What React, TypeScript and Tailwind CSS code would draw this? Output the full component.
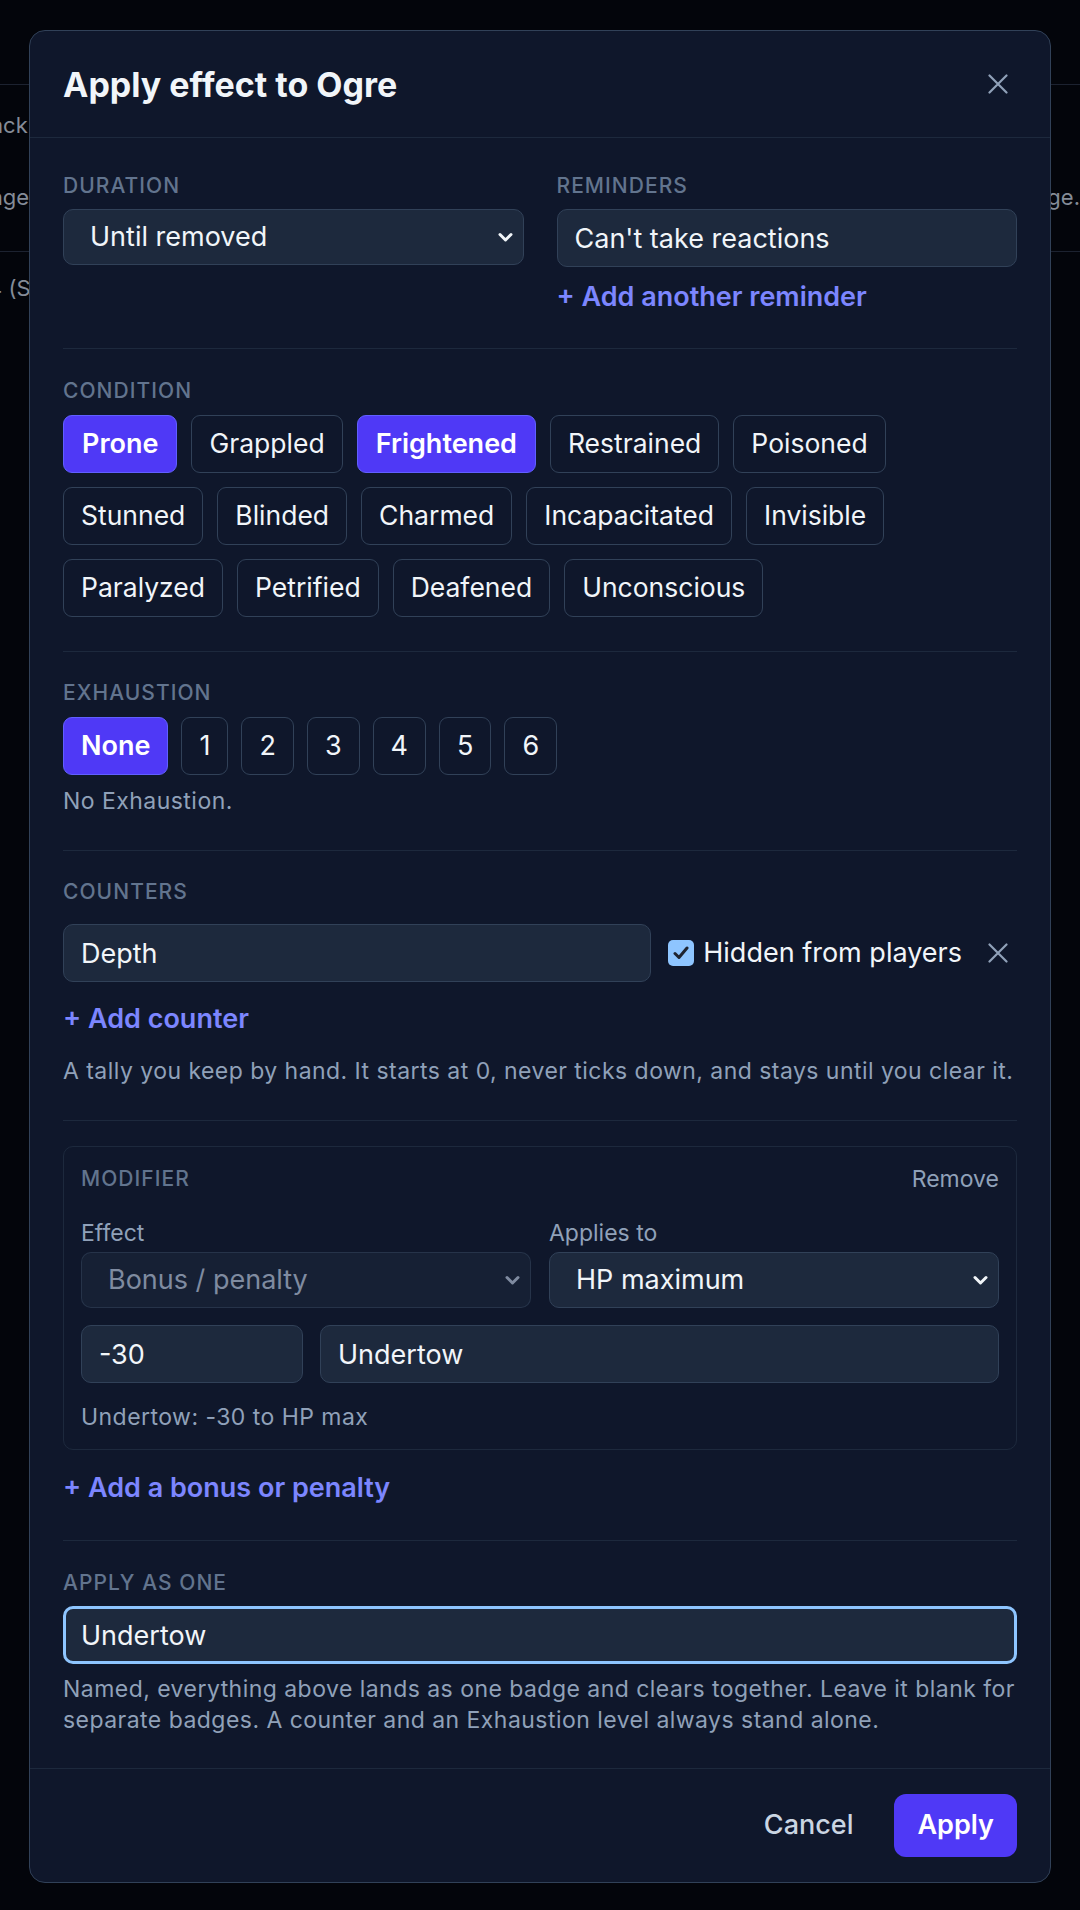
import React from "react";

const conditions = [
  { name: "Prone", on: true },
  { name: "Grappled", on: false },
  { name: "Frightened", on: true },
  { name: "Restrained", on: false },
  { name: "Poisoned", on: false },
  { name: "Stunned", on: false },
  { name: "Blinded", on: false },
  { name: "Charmed", on: false },
  { name: "Incapacitated", on: false },
  { name: "Invisible", on: false },
  { name: "Paralyzed", on: false },
  { name: "Petrified", on: false },
  { name: "Deafened", on: false },
  { name: "Unconscious", on: false },
];

const levels = ["1", "2", "3", "4", "5", "6"];

function Cross() {
  return (
    <svg width="20" height="20" viewBox="0 0 20 20" fill="none" stroke="#90a1b9" strokeWidth="2.2" strokeLinecap="round">
      <path d="M1.5 1.5 18.5 18.5M18.5 1.5 1.5 18.5" />
    </svg>
  );
}

function Chevron({ dim }: { dim?: boolean }) {
  return (
    <svg
      width="15"
      height="10"
      viewBox="0 0 15 10"
      fill="none"
      stroke={dim ? "#7f8ba0" : "#f1f5f9"}
      strokeWidth="3"
      strokeLinecap="round"
      strokeLinejoin="round"
      className="pointer-events-none absolute right-[11px] top-1/2 -translate-y-1/2"
    >
      <path d="M2 2.5 7.5 8 13 2.5" />
    </svg>
  );
}

function Label({ children }: { children: React.ReactNode }) {
  return <div className="text-[21px] leading-[28px] font-medium uppercase tracking-wider text-slate-500">{children}</div>;
}

function Select({ value, disabled }: { value: string; disabled?: boolean }) {
  return (
    <div className="relative">
      <select
        disabled={disabled}
        defaultValue={value}
        className={
          disabled
            ? "h-[56px] w-full appearance-none rounded-[10px] border border-slate-700/60 bg-slate-800/50 pl-[26px] text-[27px] text-[#7f8ba0] outline-none"
            : "h-[56px] w-full appearance-none rounded-[10px] border border-slate-700 bg-slate-800 pl-[26px] text-[27px] text-slate-100 outline-none"
        }
      >
        <option>{value}</option>
      </select>
      <Chevron dim={disabled} />
    </div>
  );
}

function TextInput({ value, className = "" }: { value: string; className?: string }) {
  return (
    <input
      defaultValue={value}
      className={`h-[58px] rounded-[10px] border border-slate-700 bg-slate-800 px-[17px] text-[27px] text-slate-100 outline-none ${className}`}
    />
  );
}

function AddLink({ children }: { children: React.ReactNode }) {
  return <button className="text-[27px] leading-[36px] font-semibold text-indigo-400">{children}</button>;
}

function Help({ children, className = "" }: { children: React.ReactNode; className?: string }) {
  return <p className={`text-[23px] tracking-[0.02em] text-slate-400 ${className}`}>{children}</p>;
}

export default function App() {
  return (
    <div className="relative h-[1910px] w-[1080px] overflow-hidden bg-[#03050b] font-['Inter',sans-serif] text-slate-100">
      {/* page behind the dialog */}
      <div className="pt-[84px] text-[22px] text-[#858c98]">
        <div className="border-t border-[#1c2230]">
          <div className="flex h-[80px] items-center justify-between">
            <span className="-ml-[38px]">Attack</span>
          </div>
          <div className="flex h-[64px] items-center justify-between">
            <span className="-ml-[57px]">Damage</span>
            <span>full damage.</span>
          </div>
        </div>
        <div className="mt-[22px] border-t border-[#1c2230] pt-[20px]">
          <span className="-ml-[12px]">4 (Str)</span>
        </div>
      </div>

      {/* dialog */}
      <div className="absolute left-[29px] top-[30px] w-[1022px] rounded-[16px] border border-slate-700 bg-slate-900">
        <div className="flex h-[107px] items-center justify-between border-b border-slate-800 px-[33px]">
          <h2 className="text-[34px] font-bold">Apply effect to Ogre</h2>
          <button className="flex h-[38px] w-[38px] items-center justify-center">
            <Cross />
          </button>
        </div>

        <div className="px-[33px]">
          <section className="grid grid-cols-2 gap-x-[33px] border-b border-slate-800 pt-[34px] pb-[33px]">
            <div>
              <Label>Duration</Label>
              <div className="mt-[9px]">
                <Select value="Until removed" />
              </div>
            </div>
            <div>
              <Label>Reminders</Label>
              <TextInput value="Can't take reactions" className="mt-[9px] h-[56px] w-full" />
              <div className="mt-[12px]">
                <AddLink>+ Add another reminder</AddLink>
              </div>
            </div>
          </section>

          <section className="border-b border-slate-800 pt-[28px] pb-[34px]">
            <Label>Condition</Label>
            <div className="mt-[10px] flex flex-wrap gap-[14px]">
              {conditions.map((c) => (
                <button
                  key={c.name}
                  className={
                    c.on
                      ? "flex h-[58px] items-center rounded-[9px] border border-indigo-500 bg-indigo-600 px-[18px] text-[27px] font-semibold text-white"
                      : "flex h-[58px] items-center rounded-[9px] border border-slate-700 px-[17px] text-[26.5px] text-slate-100"
                  }
                >
                  {c.name}
                </button>
              ))}
            </div>
          </section>

          <section className="border-b border-slate-800 pt-[27px] pb-[34px]">
            <Label>Exhaustion</Label>
            <div className="mt-[10px] flex gap-[13px]">
              <button className="flex h-[58px] items-center rounded-[9px] border border-indigo-500 bg-indigo-600 px-[17px] text-[27px] font-semibold text-white">
                None
              </button>
              {levels.map((l) => (
                <button
                  key={l}
                  className="flex h-[58px] items-center rounded-[9px] border border-slate-700 px-[17px] text-[27px] text-slate-100"
                >
                  {l}
                </button>
              ))}
            </div>
            <Help className="mt-[11px] leading-[30px]">No Exhaustion.</Help>
          </section>

          <section className="border-b border-slate-800 pt-[27px] pb-[34px]">
            <Label>Counters</Label>
            <div className="mt-[18px] flex items-center gap-[17px]">
              <TextInput value="Depth" className="min-w-0 flex-1" />
              <label className="flex items-center gap-[9px] text-[27px]">
                <span className="flex h-[26px] w-[26px] items-center justify-center rounded-[5px] bg-blue-300">
                  <svg width="16" height="14" viewBox="0 0 16 14" fill="none" stroke="#1f2430" strokeWidth="3" strokeLinecap="round" strokeLinejoin="round">
                    <path d="M2 7.5 6 11.5 14 2" />
                  </svg>
                </span>
                Hidden from players
              </label>
              <button className="flex h-[38px] w-[38px] items-center justify-center">
                <Cross />
              </button>
            </div>
            <div className="mt-[19px]">
              <AddLink>+ Add counter</AddLink>
            </div>
            <Help className="mt-[19px] leading-[30px]">
              A tally you keep by hand. It starts at 0, never ticks down, and stays until you clear it.
            </Help>
          </section>

          <section className="border-b border-slate-800 pt-[25px] pb-[34px]">
            <div className="rounded-[10px] border border-slate-800 px-[17px] pt-[18px] pb-[18px]">
              <div className="flex items-center justify-between">
                <Label>Modifier</Label>
                <button className="text-[23px] leading-[28px] text-slate-400">Remove</button>
              </div>
              <div className="mt-[26px] grid grid-cols-2 gap-x-[18px]">
                <div>
                  <div className="text-[23px] leading-[28px] text-slate-400">Effect</div>
                  <div className="mt-[5px]">
                    <Select value="Bonus / penalty" disabled />
                  </div>
                </div>
                <div>
                  <div className="text-[23px] leading-[28px] text-slate-400">Applies to</div>
                  <div className="mt-[5px]">
                    <Select value="HP maximum" />
                  </div>
                </div>
              </div>
              <div className="mt-[17px] flex gap-[17px]">
                <TextInput value="-30" className="w-[222px]" />
                <TextInput value="Undertow" className="min-w-0 flex-1" />
              </div>
              <Help className="mt-[20px] leading-[28px]">Undertow: -30 to HP max</Help>
            </div>
            <div className="mt-[20px]">
              <AddLink>+ Add a bonus or penalty</AddLink>
            </div>
          </section>

          <section className="pt-[28px] pb-[32px]">
            <Label>Apply as one</Label>
            <input
              defaultValue="Undertow"
              className="mt-[9px] h-[58px] w-full rounded-[10px] border-[3px] border-blue-300 bg-slate-800 px-[15px] text-[27px] text-slate-100 outline-none"
            />
            <Help className="mt-[10px] leading-[31px]">
              Named, everything above lands as one badge and clears together. Leave it blank for separate badges. A counter and an
              Exhaustion level always stand alone.
            </Help>
          </section>
        </div>

        <div className="flex items-center justify-end gap-[21px] border-t border-slate-800 px-[33px] py-[25px]">
          <button className="px-[20px] text-[27px] font-medium text-slate-300">Cancel</button>
          <button className="h-[63px] rounded-[12px] bg-indigo-600 px-[23px] text-[27px] font-semibold text-white">Apply</button>
        </div>
      </div>
    </div>
  );
}
